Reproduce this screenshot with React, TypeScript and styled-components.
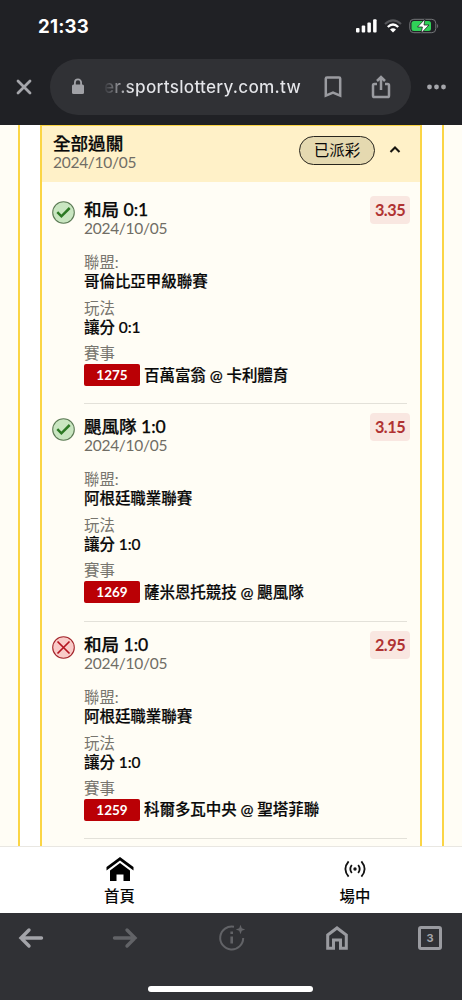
import React from "react";
import styled, { createGlobalStyle } from "styled-components";

const Global = createGlobalStyle`
  * { box-sizing: border-box; }
  body { margin: 0; background: #fff; }
  svg { display: block; flex: none; }
`;

const Screen = styled.div`
  width: 462px;
  height: 1000px;
  overflow: hidden;
  display: flex;
  flex-direction: column;
  font-family: Lato, "Noto Sans CJK TC", sans-serif;
  color: #080808;
`;

const BrowserTop = styled.header`
  height: 125px;
  flex: none;
  background: #202125;
  color: #fff;
  font-family: Inter, sans-serif;
`;

const StatusBar = styled.div`
  height: 59px;
  padding: 0 23px 7px 38px;
  display: flex;
  align-items: center;
`;

const Clock = styled.div`
  flex: 1;
  font-size: 18.6px;
  font-weight: 700;
  line-height: 24px;
  letter-spacing: 0.2px;
  transform: translateY(-0.5px);
`;

const StatusIcons = styled.div`
  display: flex;
  align-items: center;
  gap: 7px;
`;

const AddressRow = styled.div`
  height: 56px;
  padding: 0 14px 0 16px;
  display: flex;
  align-items: center;
`;

const AddressPill = styled.div`
  width: 362px;
  height: 56px;
  margin: 0 15px 0 18px;
  padding: 0 20px;
  border-radius: 28px;
  background: #303135;
  display: flex;
  align-items: center;
`;

const Url = styled.div`
  width: 200px;
  margin: 0 20px 0 18px;
  font-size: 17.2px;
  font-weight: 500;
  letter-spacing: 0.24px;
  line-height: 24px;
  white-space: nowrap;
  color: transparent;
  background: linear-gradient(90deg, #34353a 0, #e4e5e9 28px);
  background-clip: text;
  -webkit-background-clip: text;
`;

const ShareIcon = styled.svg`
  margin-left: 29px;
`;

const Content = styled.main`
  height: 721px;
  flex: none;
  overflow: hidden;
  display: flex;
  padding: 0 18px;
  background: #fffdf5;
`;

const OuterCard = styled.div`
  width: 426px;
  padding: 0 20px;
  background: #fff;
  border: solid #fbd545;
  border-width: 0 2px;
`;

const BetCard = styled.section`
  height: 721px;
  background: #fffdf5;
  border: solid #fbd545;
  border-width: 1px 2px 0;
`;

const CardHeader = styled.div`
  height: 56px;
  padding: 8px 19px 0 11px;
  display: flex;
  background: #fff1c8;
`;

const HeaderText = styled.div`
  flex: 1;
`;

const Title = styled.div`
  height: 20px;
  line-height: 20px;
  font-size: 17.6px;
  font-weight: 500;
  letter-spacing: -0.05px;
  -webkit-text-stroke: 0.25px currentColor;
  white-space: nowrap;
`;

const DateLine = styled.div`
  height: 18px;
  margin-top: -1px;
  line-height: 18px;
  font-size: 15.5px;
  letter-spacing: -0.28px;
  color: #706d65;
`;

const StatusPill = styled.div`
  width: 76px;
  height: 29px;
  margin: 2px 14px 0 0;
  border: 1px solid #28251d;
  border-radius: 15px;
  background: #e5d9b0;
  font-size: 15.5px;
  line-height: 27px;
  text-align: center;
`;

const Chevron = styled.svg`
  margin-top: 11px;
`;

const Entries = styled.div`
  padding: 5px 13px 0 10px;
`;

const Entry = styled.article`
  height: 217.3px;
  padding-top: 13px;
  display: flex;
`;

const Mark = styled.div`
  width: 32px;
  padding-top: 1px;
`;

const Details = styled.div`
  flex: 1;
  border-bottom: 1px solid #e3e1d9;
`;

const EntryTop = styled.div`
  height: 38px;
  display: flex;
  justify-content: space-between;
`;

const Odds = styled.div`
  width: 40px;
  height: 28px;
  margin: -4px -3px 0 0;
  border-radius: 4px;
  background: #f9e7e1;
  color: #b03232;
  font-size: 16.3px;
  font-weight: 700;
  letter-spacing: -0.5px;
  line-height: 28px;
  text-align: center;
`;

const Field = styled.div<{ $gap: number }>`
  margin-top: ${(p) => p.$gap}px;
`;

const Label = styled.div`
  height: 19px;
  line-height: 19px;
  font-size: 15.4px;
  color: #77756e;
`;

const Value = styled.div`
  height: 19px;
  line-height: 19px;
  font-size: 15.5px;
  font-weight: 500;
  letter-spacing: -0.05px;
  -webkit-text-stroke: 0.2px currentColor;
  white-space: nowrap;
`;

const MatchRow = styled.div`
  height: 24px;
  display: flex;
  align-items: center;
  gap: 4px;
`;

const MatchTag = styled.div`
  width: 56px;
  height: 22px;
  border-radius: 2px;
  background: #ba0005;
  color: #fff;
  font-size: 13.5px;
  font-weight: 700;
  line-height: 22px;
  text-align: center;
`;

const SiteNav = styled.nav`
  height: 67px;
  flex: none;
  display: grid;
  grid-template-columns: 239px 232px;
  border-top: 1px solid #e9e7e2;
  background: #fff;
`;

const SiteTab = styled.div`
  padding-top: 9px;
  display: flex;
  flex-direction: column;
  align-items: center;
  gap: 2px;
  font-size: 15.4px;
  font-weight: 500;
  line-height: 24px;
`;

const BrowserBottom = styled.footer`
  height: 87px;
  flex: none;
  background: #303135;
`;

const Toolbar = styled.div`
  height: 49px;
  padding: 0 20px 0 18px;
  display: grid;
  grid-template-columns: 94px 106px 108px 92px 24px;
  align-items: center;
`;

const TabCount = styled.div`
  width: 24px;
  height: 24px;
  border: 3px solid #9a9ba0;
  border-radius: 3px;
  color: #a3a4a9;
  font: 700 11px/18px Inter, sans-serif;
  text-align: center;
`;

const HomeIndicator = styled.div`
  width: 165px;
  height: 6px;
  margin: 24px auto 0 148px;
  border-radius: 3px;
  background: #fff;
`;

const ResultIcon = ({ won }: { won: boolean }) => (
  <svg width="23" height="23" viewBox="0 0 23 23" fill="none">
    <circle cx="11.5" cy="11.5" r="10.8" fill={won ? "#c9e6c1" : "#f9cbc8"} stroke={won ? "#5d7b56" : "#a3262c"} strokeWidth="1.1" />
    {won ? (
      <path d="m5.3 11.2 4.1 4.1 8.3-8.3" stroke="#2c7924" strokeWidth="2.5" />
    ) : (
      <path d="m5.5 5.5 12 12M17.5 5.5l-12 12" stroke="#b51420" strokeWidth="1.7" />
    )}
  </svg>
);

const bets = [
  { won: true, pick: "和局 0:1", odds: "3.35", league: "哥倫比亞甲級聯賽", play: "讓分 0:1", id: "1275", match: "百萬富翁 @ 卡利體育" },
  { won: true, pick: "颶風隊 1:0", odds: "3.15", league: "阿根廷職業聯賽", play: "讓分 1:0", id: "1269", match: "薩米恩托競技 @ 颶風隊" },
  { won: false, pick: "和局 1:0", odds: "2.95", league: "阿根廷職業聯賽", play: "讓分 1:0", id: "1259", match: "科爾多瓦中央 @ 聖塔菲聯" },
];

export default function App() {
  return (
    <>
      <Global />
      <Screen>
        <BrowserTop>
          <StatusBar>
            <Clock>21:33</Clock>
            <StatusIcons>
              <svg width="21" height="14" viewBox="0 0 21 14" fill="#fff">
                <rect x="0" y="9" width="3.5" height="4.5" rx="1" />
                <rect x="5.7" y="6.5" width="3.5" height="7" rx="1" />
                <rect x="11.4" y="3.5" width="3.5" height="10" rx="1" />
                <rect x="17.1" y="0.3" width="3.5" height="13.2" rx="1" />
              </svg>
              <svg width="18" height="14" viewBox="0 0 18 14" fill="none">
                <path d="M1 5Q9-2.4 17 5" stroke="#55565a" strokeWidth="2.2" />
                <path d="M3.8 8Q9 3 14.2 8" stroke="#fff" strokeWidth="2.3" />
                <path d="M6 10.4Q9 7.9 12 10.4L9 13.4Z" fill="#fff" />
              </svg>
              <svg width="30" height="16" viewBox="0 0 30 16">
                <rect x="0.8" y="1.3" width="26" height="13.4" rx="4" fill="none" stroke="#75777a" />
                <rect x="2.5" y="3" width="19.5" height="10" rx="2.5" fill="#30d158" />
                <path d="M28.2 5.7v4.6q2-2.3 0-4.6" fill="#75777a" />
                <path d="m16 1-7.5 8h4.9L12 15.5 20 7h-5Z" fill="#fff" stroke="#202125" strokeWidth="0.8" />
              </svg>
            </StatusIcons>
          </StatusBar>
          <AddressRow>
            <svg width="16" height="16" viewBox="0 0 16 16">
              <path d="m2 2 12 12M14 2 2 14" stroke="#a5a6ab" strokeWidth="2.8" strokeLinecap="round" />
            </svg>
            <AddressPill>
              <svg width="16" height="18" viewBox="0 0 16 18">
                <rect x="2" y="6.6" width="12" height="9.4" rx="1.5" fill="#a0a1a6" />
                <path d="M4.9 7V4.5a3.1 3.1 0 0 1 6.2 0V7" fill="none" stroke="#a0a1a6" strokeWidth="1.8" />
              </svg>
              <Url>er.sportslottery.com.tw</Url>
              <svg width="18" height="22" viewBox="0 0 18 22">
                <path d="M1.8 2.6Q1.8 1.4 3 1.4h12q1.2 0 1.2 1.2v17L9 16.6l-7.2 3Z" fill="none" stroke="#9a9ba0" strokeWidth="2.5" />
              </svg>
              <ShareIcon width="20" height="24" viewBox="0 0 20 24">
                <path d="M6 9H3.4Q2 9 2 10.4v10Q2 22 3.4 22h13.2q1.4 0 1.4-1.6v-10Q18 9 16.6 9H14M10 15V2.3M6 6l4-4 4 4" fill="none" stroke="#9a9ba0" strokeWidth="2.5" />
              </ShareIcon>
            </AddressPill>
            <svg width="22" height="6" viewBox="0 0 22 6" fill="#a5a6ab">
              <circle cx="3.5" cy="3" r="2.4" />
              <circle cx="10.5" cy="3" r="2.4" />
              <circle cx="17.5" cy="3" r="2.4" />
            </svg>
          </AddressRow>
        </BrowserTop>

        <Content>
          <OuterCard>
            <BetCard>
              <CardHeader>
                <HeaderText>
                  <Title>全部過關</Title>
                  <DateLine>2024/10/05</DateLine>
                </HeaderText>
                <StatusPill>已派彩</StatusPill>
                <Chevron width="12" height="9" viewBox="0 0 12 9">
                  <path d="m1.5 7 4.5-4.5L10.5 7" fill="none" stroke="#17150f" strokeWidth="2.1" />
                </Chevron>
              </CardHeader>
              <Entries>
                {bets.map((b) => (
                  <Entry key={b.id}>
                    <Mark>
                      <ResultIcon won={b.won} />
                    </Mark>
                    <Details>
                      <EntryTop>
                        <div>
                          <Title>{b.pick}</Title>
                          <DateLine>2024/10/05</DateLine>
                        </div>
                        <Odds>{b.odds}</Odds>
                      </EntryTop>
                      <Field $gap={15}>
                        <Label>聯盟:</Label>
                        <Value>{b.league}</Value>
                      </Field>
                      <Field $gap={8}>
                        <Label>玩法</Label>
                        <Value>{b.play}</Value>
                      </Field>
                      <Field $gap={7}>
                        <Label>賽事</Label>
                        <MatchRow>
                          <MatchTag>{b.id}</MatchTag>
                          <Value>{b.match}</Value>
                        </MatchRow>
                      </Field>
                    </Details>
                  </Entry>
                ))}
              </Entries>
            </BetCard>
          </OuterCard>
        </Content>

        <SiteNav>
          <SiteTab>
            <svg width="28" height="26" viewBox="0 0 28 26">
              <path d="M14 1 27.5 11v3.5L14 4.6.5 14.5V11ZM14 7l10 7.5V25h-6.500v-6.500h-7V25H4V14.500Z" fill="#000" />
            </svg>
            首頁
          </SiteTab>
          <SiteTab>
            <svg width="22" height="26" viewBox="0 0 22 26" fill="none" stroke="#111" strokeWidth="1.8">
              <path d="M7.8 9Q4.8 13 7.8 17M14.2 9Q17.2 13 14.2 17M4.6 5.3Q-1.8 13 4.6 20.7M17.4 5.3Q23.8 13 17.4 20.7" />
              <circle cx="11" cy="13" r="1.7" fill="#111" stroke="none" />
            </svg>
            場中
          </SiteTab>
        </SiteNav>

        <BrowserBottom>
          <Toolbar>
            <svg width="26" height="24" viewBox="0 0 26 24" fill="none" stroke="#a3a4a9" strokeWidth="3.4" strokeLinecap="round">
              <path d="M23.5 12H3M11 4 3 12l8 8" />
            </svg>
            <svg width="26" height="24" viewBox="0 0 26 24" fill="none" stroke="#626367" strokeWidth="3.4" strokeLinecap="round">
              <path d="M2.5 12H23M15 4l8 8-8 8" />
            </svg>
            <svg width="28" height="28" viewBox="0 0 28 28" fill="none" stroke="#626367" strokeWidth="2">
              <path d="M16 2.7A11.5 11.5 0 1 0 25.2 14" />
              <path d="M13.7 12.5v7M13.7 7.5v2.5" strokeWidth="2.6" />
              <path d="m22.5.8 1.3 3.4 3.4 1.3-3.4 1.3-1.3 3.4-1.3-3.4-3.4-1.3 3.4-1.3Z" fill="#626367" stroke="none" />
            </svg>
            <svg width="22" height="24" viewBox="0 0 22 24" fill="none" stroke="#9a9ba0" strokeWidth="3">
              <path d="M1.7 9 11 2l9.3 7v13.3h-5.800V14h-7v8.300H1.700Z" />
            </svg>
            <TabCount>3</TabCount>
          </Toolbar>
          <HomeIndicator />
        </BrowserBottom>
      </Screen>
    </>
  );
}
